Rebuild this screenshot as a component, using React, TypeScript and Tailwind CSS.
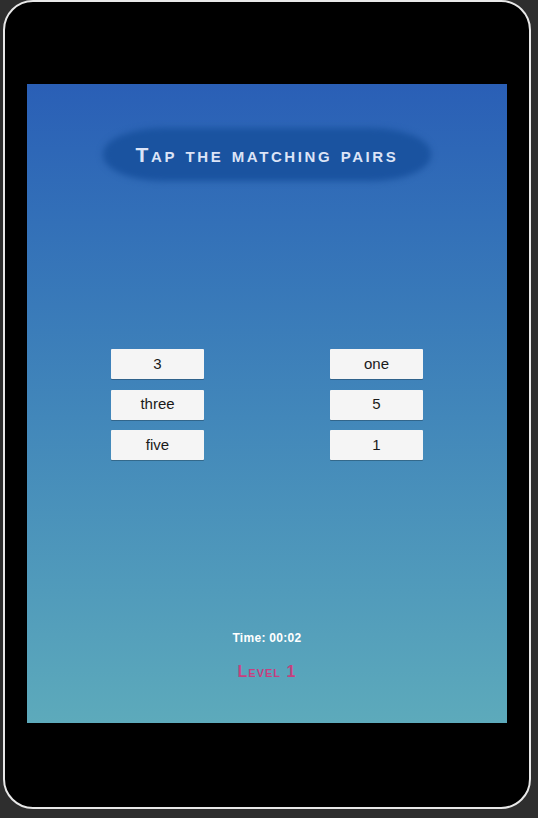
const left = ["3", "three", "five"];
const right = ["one", "5", "1"];

function Tile({ label }: { label: string }) {
  return (
    <button className="w-[93px] h-[30px] bg-[#f5f5f5] rounded-[1px] shadow-[0_1px_0_rgba(0,0,0,0.25)] text-[15px] text-[#1a1a1a] flex items-center justify-center">
      {label}
    </button>
  );
}

export default function App() {
  return (
    <div
      className="w-[538px] h-[818px] bg-[#2e2e2e] relative overflow-hidden"
      style={{ fontFamily: '"Liberation Sans", Arial, sans-serif' }}
    >
      <div className="absolute left-[3px] top-0 w-[528px] h-[809px] bg-black border-2 border-[#e8e8e8] rounded-[30px]" />
      <div className="absolute left-[27px] top-[84px] w-[480px] h-[639px] bg-gradient-to-b from-[#2a5fb6] to-[#5daabb] flex flex-col items-center">
        <div className="relative mt-[43px] w-[334px] h-[55px] flex items-center justify-center">
          <div className="absolute inset-x-[3px] inset-y-[1px] rounded-[60px/26px] bg-[#1a53a0] blur-[3px]" />
          <h1 className="relative text-[21px] tracking-[2.6px] text-[#dce4f7] font-semibold [font-variant:small-caps]">
            Tap the matching pairs
          </h1>
        </div>
        <div className="mt-[167px] w-full flex justify-between pl-[84px] pr-[84px]">
          <div className="flex flex-col gap-[10.5px]">
            {left.map((l) => (
              <Tile key={l} label={l} />
            ))}
          </div>
          <div className="flex flex-col gap-[10.5px]">
            {right.map((r) => (
              <Tile key={r} label={r} />
            ))}
          </div>
        </div>
        <div className="mt-[169px] text-[12px] font-bold text-white tracking-[0.3px]">Time: 00:02</div>
        <div className="mt-[13px] text-[16px] text-[#c6407f] font-semibold [font-variant:small-caps] tracking-[1px]">
          Level 1
        </div>
      </div>
    </div>
  );
}
